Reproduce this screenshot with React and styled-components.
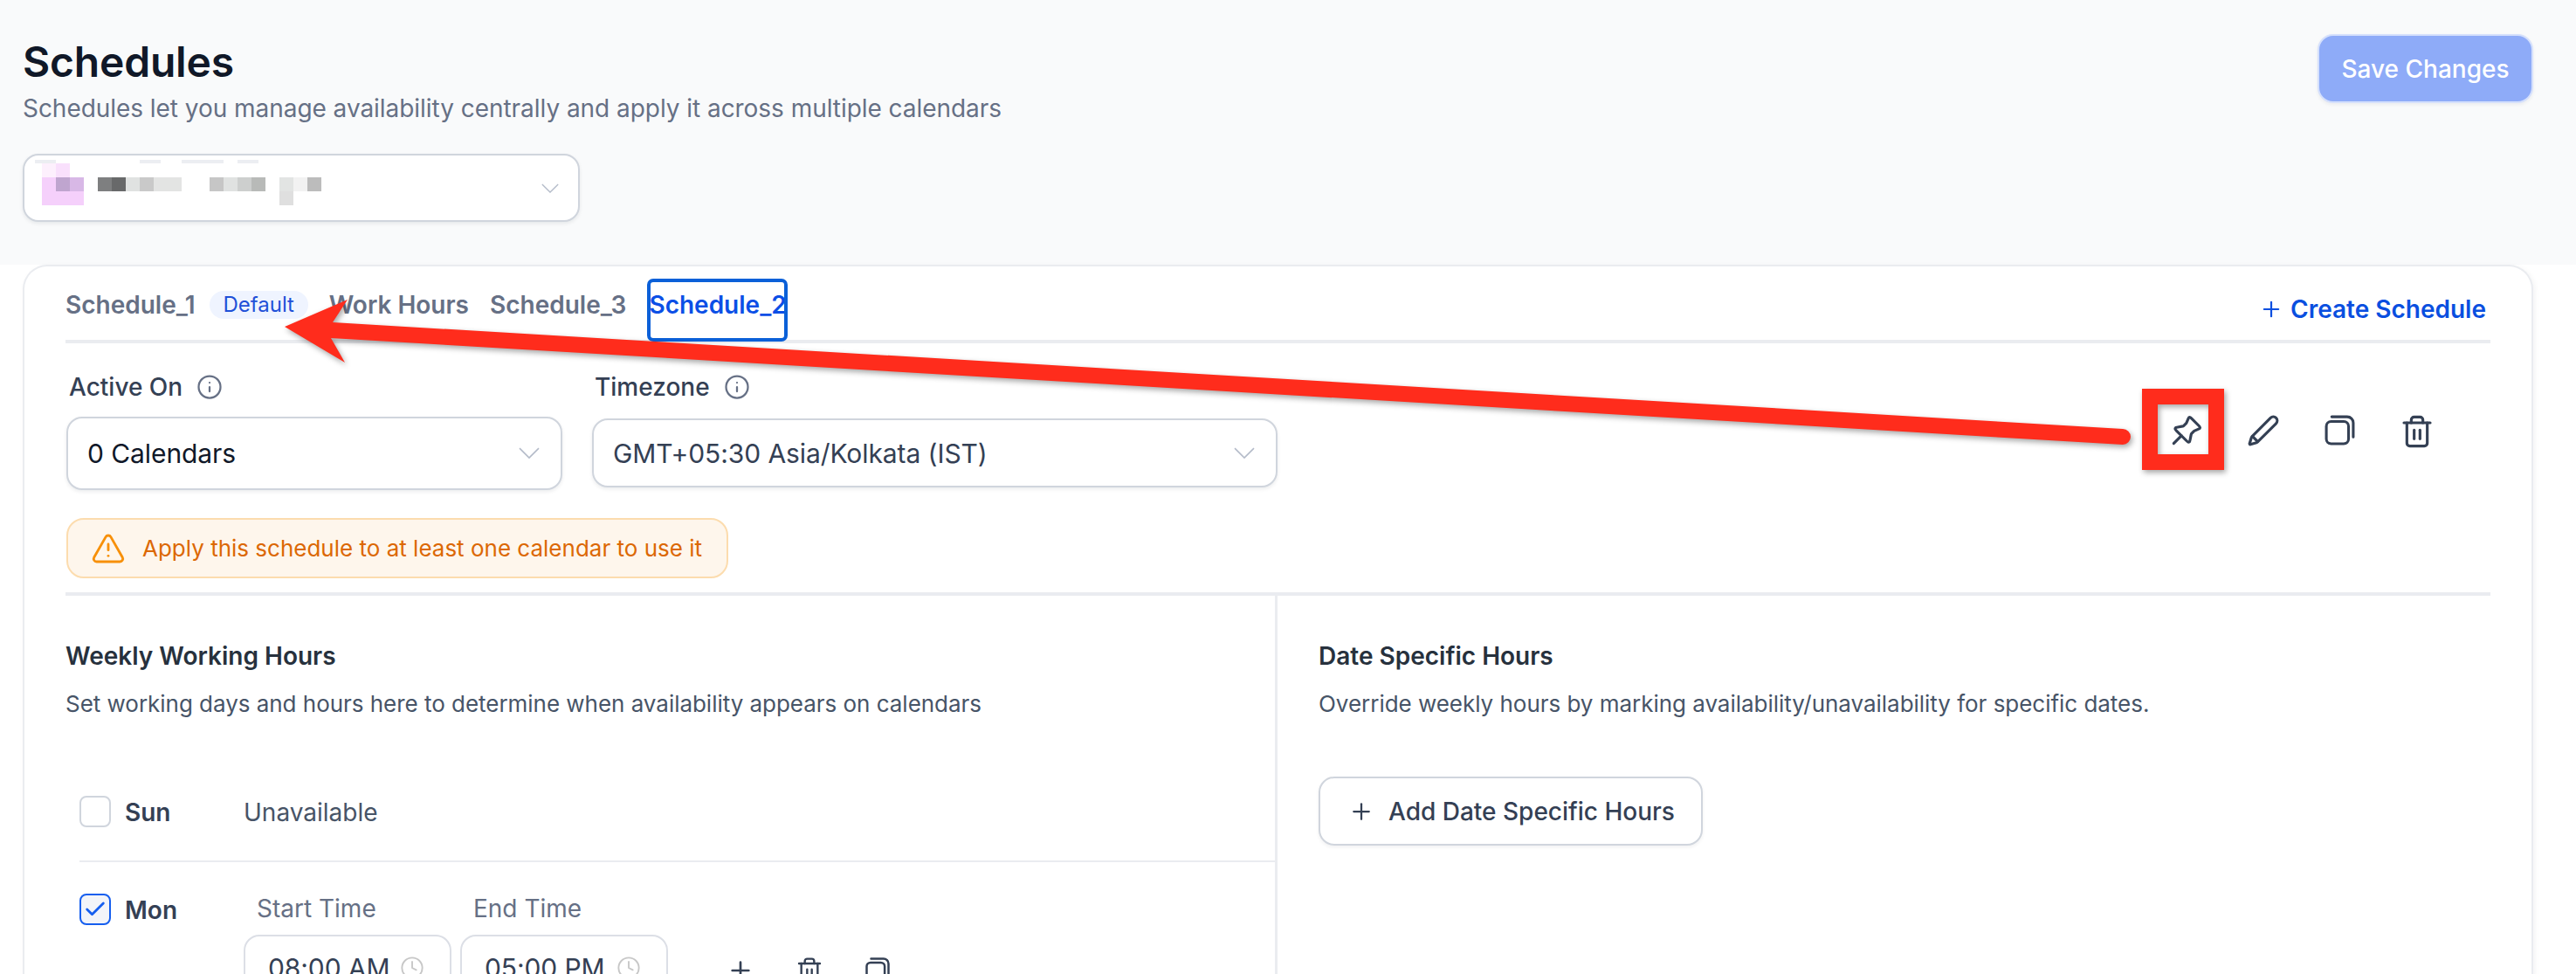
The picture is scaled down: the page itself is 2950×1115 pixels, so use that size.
import React from 'react';
import styled, { createGlobalStyle } from 'styled-components';
import { Check, Clock, Info, Plus, Trash2, TriangleAlert } from 'lucide-react';

const GlobalStyle = createGlobalStyle`
  html, body {
    margin: 0;
    height: 1115px;
    overflow: hidden;
    background: #ffffff;
    font-family: Inter, "Noto Sans", sans-serif;
    color: #344054;
  }
  * { box-sizing: border-box; }
`;

const Page = styled.div`
  position: relative;
  width: 2950px;
  height: 1115px;
  overflow: hidden;
`;

const Header = styled.header`
  display: flex;
  justify-content: space-between;
  align-items: flex-start;
  height: 303px;
  padding: 39px 49px 0 26px;
  background: #f9fafb;
`;

const Title = styled.h1`
  margin: 4px 0 5px;
  font-size: 48px;
  line-height: 56px;
  font-weight: 600;
  letter-spacing: -0.2px;
  color: #101828;
`;

const Subtitle = styled.p`
  margin: 0;
  font-size: 28px;
  line-height: 40px;
  letter-spacing: -0.045px;
  color: #667085;
`;

const Select = styled.div`
  display: flex;
  align-items: center;
  justify-content: space-between;
  width: ${(p) => p.$width}px;
  height: ${(p) => p.$height}px;
  margin-top: ${(p) => p.$top || 0}px;
  padding: 0 ${(p) => p.$right || 24}px 0 22px;
  background: #ffffff;
  border: 2px solid #d0d5dd;
  border-radius: 18px;
  box-shadow: 0 2px 4px rgba(16, 24, 40, 0.08);
  font-size: 30px;
  letter-spacing: -0.08px;
  color: ${(p) => p.$color || '#101828'};
`;

const AccountSelect = styled(Select)`
  padding-left: 12px;
`;

const Mosaic = styled.svg`
  align-self: flex-start;
  margin-top: 5px;
`;

const SaveButton = styled.button`
  width: 247px;
  height: 79px;
  border: 2px solid #d5e0fc;
  border-radius: 18px;
  background: #8eabf8;
  box-shadow: 0 2px 4px rgba(16, 24, 40, 0.06);
  font: 500 28px Inter, sans-serif;
  color: #ffffff;
`;

const Card = styled.section`
  height: 900px;
  margin: 0 49px 0 26px;
  background: #ffffff;
  border: 2px solid #eaecf0;
  border-bottom: 0;
  border-radius: 28px 28px 0 0;
  box-shadow: 2px 2px 6px rgba(16, 24, 40, 0.05);
`;

const TabBar = styled.div`
  display: flex;
  align-items: flex-start;
  justify-content: space-between;
  height: 88px;
  margin: 0 47px;
  padding-top: 18px;
  border-bottom: 4px solid #eaecf0;
`;

const Tabs = styled.div`
  display: flex;
  align-items: flex-start;
  gap: 24px;
`;

const Tab = styled.div`
  display: flex;
  align-items: flex-start;
  gap: 16px;
  height: 64px;
  font-size: 28px;
  line-height: 52px;
  font-weight: 600;
  white-space: nowrap;
  color: ${(p) => (p.$active ? '#0b4fe6' : '#667085')};
`;

const ActiveTab = styled(Tab)`
  width: 153px;
  margin-left: 4px;
  text-indent: -2px;
  outline: 4px solid #0b60d8;
  border-radius: 3px;
`;

const DefaultBadge = styled.span`
  margin-top: 10px;
  width: 113px;
  height: 32px;
  border-radius: 16px;
  background: #eff4ff;
  font-size: 24px;
  line-height: 32px;
  font-weight: 400;
  text-align: center;
  color: #1f50d8;
`;

const CreateLink = styled.div`
  display: flex;
  align-items: center;
  gap: 8px;
  height: 52px;
  margin-top: 5px;
  padding-right: 5px;
  font-size: 28px;
  font-weight: 600;
  color: #0a4fe0;
`;

const Settings = styled.div`
  display: flex;
  justify-content: space-between;
  align-items: flex-start;
  margin: 0 47px;
  padding: 30px 64px 16px 1px;
  border-bottom: 4px solid #eaecf0;
`;

const Fields = styled.div`
  display: flex;
  gap: 34px;
`;

const Field = styled.div`
  display: flex;
  flex-direction: column;
`;

const FieldLabel = styled.div`
  display: flex;
  align-items: center;
  gap: 16px;
  height: 40px;
  margin-bottom: ${(p) => p.$gap}px;
  padding-left: 3px;
  font-size: 28px;
  font-weight: 500;
  color: #344054;
`;

const Warning = styled.div`
  display: flex;
  align-items: center;
  gap: 19px;
  width: 758px;
  height: 69px;
  margin-top: 32px;
  padding-left: 26px;
  background: #fef6ec;
  border: 2px solid #fcdcae;
  border-radius: 20px;
  font-size: 26px;
  color: #dc6803;
`;

const Actions = styled.div`
  display: flex;
  gap: ${(p) => p.$gap}px;
  margin-top: ${(p) => p.$top}px;
  margin-left: ${(p) => p.$left || 0}px;
  color: #344054;
`;

const Columns = styled.div`
  display: grid;
  grid-template-columns: 1435px 1fr;
`;

const LeftColumn = styled.div`
  padding: 49px 0 0 47px;
  border-right: 3px solid #eaecf0;
  height: 450px;
`;

const RightColumn = styled.div`
  padding: 49px 0 0 47px;
`;

const SectionTitle = styled.h2`
  margin: 0 0 17px;
  font-size: 28px;
  line-height: 40px;
  font-weight: 600;
  color: #27313d;
`;

const SectionText = styled.p`
  margin: 0;
  font-size: 26px;
  line-height: 36px;
  letter-spacing: -0.03px;
  color: #475467;
`;

const AddButton = styled.button`
  display: flex;
  align-items: center;
  gap: 16px;
  width: 440px;
  height: 79px;
  margin-top: 65px;
  padding: 0 0 0 32px;
  background: #ffffff;
  border: 2px solid #d0d5dd;
  border-radius: 18px;
  box-shadow: 0 2px 4px rgba(16, 24, 40, 0.06);
  font: 500 28px Inter, sans-serif;
  color: #344054;
`;

const DayRow = styled.div`
  display: flex;
  align-items: flex-start;
  margin-left: 16px;
  padding-top: ${(p) => p.$top}px;
  padding-bottom: ${(p) => p.$bottom || 0}px;
  border-bottom: ${(p) => (p.$last ? 'none' : '2px solid #eaecf0')};
`;

const Checkbox = styled.span`
  display: flex;
  align-items: center;
  justify-content: center;
  flex: none;
  width: 36px;
  height: 36px;
  border: 2px solid ${(p) => (p.$checked ? '#155eef' : '#d0d5dd')};
  border-radius: 8px;
  background: ${(p) => (p.$checked ? '#f2f4f9' : '#ffffff')};
  color: #155eef;
`;

const DayName = styled.span`
  width: 152px;
  padding-left: 16px;
  font-size: 28px;
  line-height: 38px;
  font-weight: 600;
  color: #344054;
`;

const Unavailable = styled.span`
  font-size: 28px;
  line-height: 38px;
  color: #475467;
`;

const TimeField = styled.div`
  display: flex;
  flex-direction: column;
  width: 238px;
`;

const TimeGroup = styled.div`
  display: flex;
  gap: 10px;
  margin-top: -3px;
`;

const TimeLabel = styled.span`
  padding-left: 15px;
  font-size: 28px;
  line-height: 40px;
  margin-bottom: 10px;
  color: #667085;
`;

const TimeInput = styled.div`
  display: flex;
  align-items: center;
  justify-content: space-between;
  height: 76px;
  padding: 0 29px 0 26px;
  border: 2px solid #dcdfe6;
  border-radius: 18px;
  font-size: 30px;
  letter-spacing: -0.1px;
  white-space: nowrap;
  color: #344054;
`;

const Overlay = styled.svg`
  position: absolute;
  top: 0;
  left: 0;
  pointer-events: none;
  filter: drop-shadow(2px 3px 3px rgba(0, 0, 0, 0.35));
`;

const mosaic = [
  [0, 0, 24, 4, '#eceef2'], [120, 0, 24, 4, '#eceef2'], [168, 0, 48, 4, '#eceef2'], [232, 0, 24, 4, '#eceef2'],
  [8, 4, 16, 16, '#fdf0fd'], [24, 4, 16, 16, '#f9e0fc'],
  [8, 20, 16, 16, '#f5d0fb'], [24, 20, 16, 16, '#bfa5cf'], [40, 20, 16, 16, '#d8b8e6'],
  [72, 20, 16, 16, '#7e7f80'], [88, 20, 16, 16, '#68696a'], [104, 20, 16, 16, '#e0e2e1'],
  [120, 20, 16, 16, '#c9c9c9'], [136, 20, 32, 16, '#e3e4e3'],
  [200, 20, 16, 16, '#c6c6c6'], [216, 20, 16, 16, '#e0e2e1'], [232, 20, 16, 16, '#cdcfce'], [248, 20, 16, 16, '#b8bab8'],
  [280, 20, 16, 16, '#e2e4e3'], [296, 20, 16, 16, '#f2f2f2'], [312, 20, 16, 16, '#bcbcbc'],
  [8, 36, 48, 16, '#f5d0fb'], [280, 36, 16, 16, '#dfdfdf'],
];

const Chevron = ({ width }) => (
  <svg width={width} height={width * 0.55} viewBox="0 0 24 13" fill="none" stroke="#b4bbc9" strokeWidth="1.6">
    <path d="M1 1l11 11L23 1" />
  </svg>
);

const PinIcon = ({ size }) => (
  <svg width={size} height={size} viewBox="0 0 24 24" fill="none" stroke="currentColor" strokeWidth="2" strokeLinecap="round" strokeLinejoin="round">
    <path d="M8.38 15.62l-5.66 5.66M11.7 6.74l-1.56 1.56c-.13.13-.2.19-.27.24-.06.05-.13.08-.2.11-.09.03-.17.05-.35.09l-3.67.73c-.95.19-1.43.29-1.65.54-.19.22-.28.51-.24.8.05.33.39.67 1.08 1.36l7.09 7.09c.69.69 1.03 1.03 1.36 1.08.29.04.58-.05.8-.24.22-.22.32-.7.51-1.65l.73-3.67c.04-.18.05-.26.09-.35.03-.07.06-.14.11-.2.05-.07.11-.14.24-.27l1.56-1.56c.08-.08.12-.12.17-.16.04-.03.08-.06.13-.09.05-.03.1-.05.21-.1l2.49-1.07c.73-.31 1.09-.47 1.26-.72.14-.22.2-.49.14-.75-.06-.3-.34-.58-.9-1.14l-5.14-5.14c-.56-.56-.84-.84-1.14-.9-.26-.05-.53 0-.75.14-.25.17-.41.53-.72 1.26l-1.07 2.49c-.05.11-.07.16-.1.21-.03.05-.06.09-.09.13-.04.05-.08.09-.16.17z" />
  </svg>
);

const PencilIcon = ({ size }) => (
  <svg width={size} height={size} viewBox="0 0 24 24" fill="none" stroke="currentColor" strokeWidth="2" strokeLinecap="round" strokeLinejoin="round">
    <path d="M21.17 6.81a2.82 2.82 0 0 0-3.99-3.99L3.84 16.17a2 2 0 0 0-.5.83l-1.32 4.36a.5.5 0 0 0 .62.62l4.35-1.32a2 2 0 0 0 .83-.5z" />
    <path d="M4.2 16.2l3.6 3.6" />
  </svg>
);

const CopyIcon = ({ size }) => (
  <svg width={size} height={size} viewBox="0 0 24 24" fill="none" stroke="currentColor" strokeWidth="2" strokeLinecap="round" strokeLinejoin="round">
    <rect x="2" y="5.5" width="16.5" height="16.5" rx="3.5" />
    <path d="M6 2h11.5A4.5 4.5 0 0 1 22 6.5V17" />
  </svg>
);

const App = () => {
  return (
    <Page>
      <GlobalStyle />
      <Header>
        <div>
          <Title>Schedules</Title>
          <Subtitle>Schedules let you manage availability centrally and apply it across multiple calendars</Subtitle>
          <AccountSelect $width={638} $height={78} $top={32} $right={22}>
            <Mosaic width="328" height="52" viewBox="0 0 328 52">
              {mosaic.map(([x, y, w, h, fill]) => (
                <rect key={`${x}-${y}`} x={x} y={y} width={w} height={h} fill={fill} />
              ))}
            </Mosaic>
            <Chevron width={20} />
          </AccountSelect>
        </div>
        <SaveButton>Save Changes</SaveButton>
      </Header>

      <Card>
        <TabBar>
          <Tabs>
            <Tab>
              Schedule_1
              <DefaultBadge>Default</DefaultBadge>
            </Tab>
            <Tab>Work Hours</Tab>
            <Tab>Schedule_3</Tab>
            <ActiveTab $active>Schedule_2</ActiveTab>
          </Tabs>
          <CreateLink>
            <Plus size={28} strokeWidth={1.9} />
            Create Schedule
          </CreateLink>
        </TabBar>

        <Settings>
          <div>
            <Fields>
              <Field>
                <FieldLabel $gap={14}>
                  Active On
                  <Info size={30} strokeWidth={1.8} color="#667085" />
                </FieldLabel>
                <Select $width={568} $height={84}>
                  0 Calendars
                  <Chevron width={24} />
                </Select>
              </Field>
              <Field>
                <FieldLabel $gap={16}>
                  Timezone
                  <Info size={30} strokeWidth={1.8} color="#667085" />
                </FieldLabel>
                <Select $width={785} $height={79} $color="#344054">
                  GMT+05:30 Asia/Kolkata (IST)
                  <Chevron width={24} />
                </Select>
              </Field>
            </Fields>
            <Warning>
              <TriangleAlert size={40} strokeWidth={1.7} color="#f79009" />
              Apply this schedule to at least one calendar to use it
            </Warning>
          </div>
          <Actions $gap={50} $top={51}>
            <PinIcon size={38} />
            <PencilIcon size={38} />
            <CopyIcon size={37} />
            <Trash2 size={40} strokeWidth={1.9} />
          </Actions>
        </Settings>

        <Columns>
          <LeftColumn>
            <SectionTitle>Weekly Working Hours</SectionTitle>
            <SectionText>Set working days and hours here to determine when availability appears on calendars</SectionText>
            <DayRow $top={87} $bottom={36}>
              <Checkbox />
              <DayName>Sun</DayName>
              <Unavailable>Unavailable</Unavailable>
            </DayRow>
            <DayRow $top={36} $last>
              <Checkbox $checked>
                <Check size={28} strokeWidth={2.4} />
              </Checkbox>
              <DayName>Mon</DayName>
              <TimeGroup>
                <TimeField>
                  <TimeLabel>Start Time</TimeLabel>
                  <TimeInput>
                    08:00 AM
                    <Clock size={28} strokeWidth={1.6} color="#c7c7c7" />
                  </TimeInput>
                </TimeField>
                <TimeField>
                  <TimeLabel>End Time</TimeLabel>
                  <TimeInput>
                    05:00 PM
                    <Clock size={28} strokeWidth={1.6} color="#c7c7c7" />
                  </TimeInput>
                </TimeField>
              </TimeGroup>
              <Actions $gap={47} $top={72} $left={67}>
                <Plus size={32} strokeWidth={2} />
                <Trash2 size={32} strokeWidth={1.8} />
                <CopyIcon size={30} />
              </Actions>
            </DayRow>
          </LeftColumn>
          <RightColumn>
            <SectionTitle>Date Specific Hours</SectionTitle>
            <SectionText>Override weekly hours by marking availability/unavailability for specific dates.</SectionText>
            <AddButton>
              <Plus size={30} strokeWidth={1.8} />
              Add Date Specific Hours
            </AddButton>
          </RightColumn>
        </Columns>
      </Card>

      <Overlay width="2950" height="1115" viewBox="0 0 2950 1115">
        <path
          d="M326 374L398 343L381 369L2431 491A9 9 0 0 1 2431 509L379 387L395 415Z"
          fill="#ff2c1c"
        />
        <rect x="2462" y="454" width="76" height="75" fill="none" stroke="#ff2c1c" strokeWidth="18" />
      </Overlay>
    </Page>
  );
};

export default App;
